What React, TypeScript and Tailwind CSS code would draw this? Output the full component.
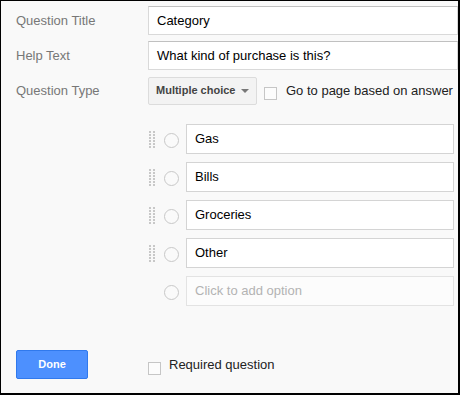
const options = ["Gas", "Bills", "Groceries", "Other"];

function Handle({ hidden }: { hidden?: boolean }) {
  return (
    <div className={`grid w-[6px] grid-cols-2 gap-x-[2px] gap-y-[1px] ${hidden ? "invisible" : ""}`}>
      {Array.from({ length: 12 }).map((_, i) => (
        <span key={i} className="block h-[2px] w-[2px] bg-[#c8c8c8]" />
      ))}
    </div>
  );
}

function Radio() {
  return <span className="block h-[15px] w-[15px] shrink-0 rounded-full border border-[#c8c8c8] bg-[#fafafa]" />;
}

function Checkbox({ className = "" }: { className?: string }) {
  return <span className={`block h-[13px] w-[13px] shrink-0 border border-[#c6c6c6] bg-[#fcfcfc] ${className}`} />;
}

export default function App() {
  return (
    <div
      className="flex h-[395px] w-[460px] flex-col overflow-hidden border-b-2 border-l border-r-2 border-t border-black bg-[#f9f9f9] pl-[15px] pt-[5px] text-[13px] text-[#222]"
      style={{ fontFamily: '"Liberation Sans", Arial, sans-serif' }}
    >
      <div className="flex h-[29px] items-center">
        <label className="w-[132px] shrink-0 text-[#777]">Question Title</label>
        <div className="flex h-full flex-1 items-center border border-[#d9d9d9] border-t-[#c0c0c0] bg-white pl-[8px] text-black">
          Category
        </div>
      </div>

      <div className="mt-[6px] flex h-[29px] items-center">
        <label className="w-[132px] shrink-0 text-[#777]">Help Text</label>
        <div className="flex h-full flex-1 items-center border border-[#d9d9d9] border-t-[#c0c0c0] bg-white pl-[8px] text-black">
          What kind of purchase is this?
        </div>
      </div>

      <div className="mt-[6px] flex h-[29px] items-center">
        <label className="w-[132px] shrink-0 text-[#777]">Question Type</label>
        <div className="flex h-[28px] w-[109px] items-center rounded-[2px] border border-[#dcdcdc] bg-[#f3f3f3] pl-[7px] text-[11px] font-bold text-[#444]">
          Multiple choice
          <span className="ml-[6px] mt-[1px] h-0 w-0 border-l-[4px] border-r-[4px] border-t-[4px] border-l-transparent border-r-transparent border-t-[#777]" />
        </div>
        <Checkbox className="ml-[7px] mt-[5px]" />
        <span className="ml-[9px]">Go to page based on answer</span>
      </div>

      <div className="mr-[4px] mt-[19px] flex flex-col gap-[8px] pl-[133px]">
        {options.map((o) => (
          <div key={o} className="flex h-[30px] items-center">
            <Handle />
            <div className="ml-[9px] mt-[2px]">
              <Radio />
            </div>
            <div className="ml-[7px] flex h-full flex-1 items-center border border-[#d4d4d4] bg-white pl-[8px] text-black">
              {o}
            </div>
          </div>
        ))}
        <div className="flex h-[30px] items-center">
          <Handle hidden />
          <div className="ml-[9px] mt-[2px]">
            <Radio />
          </div>
          <div className="ml-[7px] flex h-full flex-1 items-center border border-[#e3e3e3] bg-[#fcfcfc] pl-[8px] text-[#b3b3b3]">
            Click to add option
          </div>
        </div>
      </div>

      <div className="mt-[44px] flex items-center">
        <button className="h-[29px] w-[72px] rounded-[2px] border border-[#3079ed] bg-[#4d90fe] text-[11px] font-bold text-white">
          Done
        </button>
        <Checkbox className="ml-[60px] mt-[7px]" />
        <span className="ml-[8px]">Required question</span>
      </div>
    </div>
  );
}
